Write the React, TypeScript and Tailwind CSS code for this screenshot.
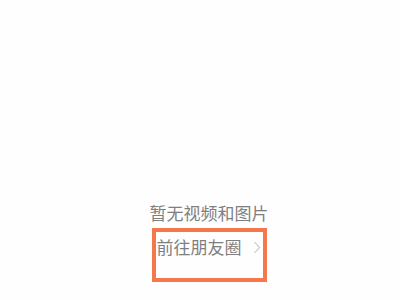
import React from "react";

export default function App() {
  return (
    <div
      className="w-[400px] h-[300px] bg-[#fefefe] flex flex-col items-center"
      style={{ fontFamily: '"Noto Sans CJK SC", "Noto Sans", sans-serif' }}
    >
      <div className="pl-[18px] pt-[203px] flex flex-col items-center">
        <div className="text-[17px] leading-[20px] text-[#7f7f7f] whitespace-nowrap">
          暂无视频和图片
        </div>
        <div className="mt-[5px] w-[115px] h-[54px] border-[4px] border-[#f5784c] flex items-start pl-[1px] pt-[5px]">
          <span className="text-[17px] leading-[20px] text-[#7f7f7f] whitespace-nowrap">
            前往朋友圈
          </span>
          <svg
            className="ml-[11px] mt-[4px]"
            width="8"
            height="13"
            viewBox="0 0 8 13"
            fill="none"
          >
            <path d="M1.5 1 L6.5 6.5 L1.5 12" stroke="#c2c2c2" strokeWidth="1.1" />
          </svg>
        </div>
      </div>
    </div>
  );
}
